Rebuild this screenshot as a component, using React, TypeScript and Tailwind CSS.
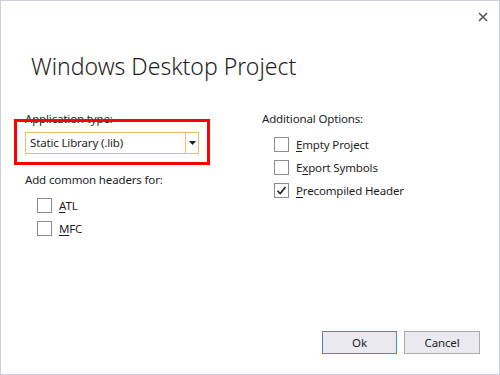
import React from "react";

function CheckBox({ checked }: { checked?: boolean }) {
  return (
    <span className="flex h-[15px] w-[15px] shrink-0 items-center justify-center border border-[#8c8c8c] bg-white">
      {checked && (
        <svg width="11" height="11" viewBox="0 0 11 11">
          <path d="M1.5 5.8 L4.2 8.5 L9.5 2" fill="none" stroke="#1e1e1e" strokeWidth="1.6" />
        </svg>
      )}
    </span>
  );
}

function Option({ label, hot, checked }: { label: string; hot: number; checked?: boolean }) {
  return (
    <label className="flex h-[23px] items-center gap-[7px]">
      <CheckBox checked={checked} />
      <span>
        {label.slice(0, hot)}
        <span className="underline underline-offset-2">{label[hot]}</span>
        {label.slice(hot + 1)}
      </span>
    </label>
  );
}

export default function App() {
  return (
    <div
      className="flex h-[375px] w-[500px] flex-col border border-[#cccedb] bg-white text-[11.5px] tracking-[-0.15px] text-[#1e1e1e]"
      style={{ fontFamily: '"Segoe UI", "Noto Sans", "Open Sans", sans-serif' }}
    >
      {/* Close button */}
      <div className="flex justify-end pr-[10px] pt-[10px]">
        <svg width="12" height="12" viewBox="0 0 12 12">
          <path d="M2 2 L10 10 M10 2 L2 10" stroke="#555" strokeWidth="1.6" />
        </svg>
      </div>

      <h1 className="ml-[30px] mt-[32px] text-[23px] font-light leading-none tracking-normal text-[#1e1e1e]">
        Windows Desktop Project
      </h1>

      <div className="mt-[33px] flex flex-1">
        {/* Left column */}
        <div className="ml-[24px] w-[237px]">
          <div className="relative">
            <div className="leading-[16px]">Application type:</div>
            <div className="mt-[5px] flex h-[22px] w-[174px] items-center border border-[#e5c365] bg-white">
              <span className="flex-1 px-[4px]">Static Library (.lib)</span>
              <span className="flex h-full w-[13px] items-center justify-center border-l border-[#e5c365]">
                <svg width="7" height="4" viewBox="0 0 7 4">
                  <path d="M0 0 H7 L3.5 4 Z" fill="#1e1e1e" />
                </svg>
              </span>
            </div>
            {/* Highlight box */}
            <div className="absolute left-[-11px] top-[8px] h-[46px] w-[196px] border-[3px] border-[#ff0000]" />
          </div>
          <div className="mt-[18px] leading-[16px]">Add common headers for:</div>
          <div className="ml-[12px] mt-[6px]">
            <Option label="ATL" hot={0} />
            <Option label="MFC" hot={0} />
          </div>
        </div>

        {/* Right column */}
        <div>
          <div className="leading-[16px]">Additional Options:</div>
          <div className="ml-[12px] mt-[6px]">
            <Option label="Empty Project" hot={0} />
            <Option label="Export Symbols" hot={1} />
            <Option label="Precompiled Header" hot={0} checked />
          </div>
        </div>
      </div>

      {/* Buttons */}
      <div className="mb-[20px] flex justify-end gap-[7px] pr-[19px]">
        <button className="h-[23px] w-[75px] border border-[#3c8ce0] bg-[#e9e9ef]">Ok</button>
        <button className="h-[23px] w-[76px] border border-[#acacac] bg-[#e9e9ef]">Cancel</button>
      </div>
    </div>
  );
}
